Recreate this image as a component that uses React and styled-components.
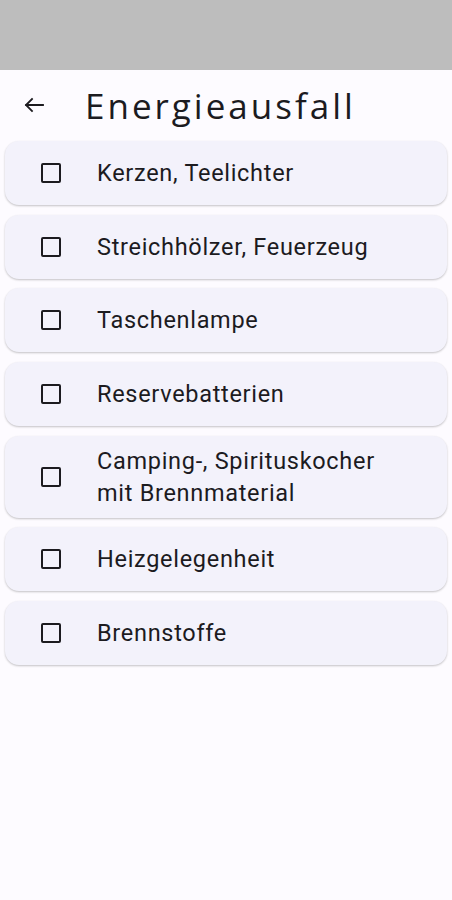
import React from "react";
import styled, { createGlobalStyle } from "styled-components";

const Global = createGlobalStyle`
  html, body { margin: 0; padding: 0; background: #fdfbff; }
  body { font-family: Roboto, "Noto Sans", sans-serif; }
`;

const Screen = styled.div`
  width: 452px;
  min-height: 900px;
  background: #fdfbff;
  display: flex;
  flex-direction: column;
`;

const StatusBar = styled.div`
  height: 70px;
  background: #bdbdbd;
`;

const TopBar = styled.div`
  height: 70px;
  display: flex;
  align-items: center;
  padding-left: 22px;
`;

const BackButton = styled.button`
  width: 24px;
  height: 24px;
  border: none;
  background: none;
  padding: 0;
  display: flex;
  align-items: center;
  justify-content: center;
  color: #1c1b1f;
`;

const Title = styled.h1`
  margin: 0 0 0 39px;
  font-family: "Open Sans", sans-serif;
  font-weight: 400;
  font-size: 35px;
  letter-spacing: 3px;
  color: #1c1b1f;
  line-height: 1;
`;

const List = styled.div`
  display: flex;
  flex-direction: column;
  gap: 9.7px;
  padding: 1px 5px 0 5px;
`;

const Card = styled.label`
  display: flex;
  align-items: center;
  min-height: 64px;
  box-sizing: border-box;
  padding: ${(p) => (p.$tall ? "9px 0" : "0")};
  background: #f3f2fb;
  border-radius: 14px;
  box-shadow: 0 1px 2px rgba(0, 0, 0, 0.18), 0 1px 3px rgba(0, 0, 0, 0.06);
`;

const Box = styled.span`
  width: 20px;
  height: 20px;
  box-sizing: border-box;
  border: 2px solid #1c1b1f;
  border-radius: 2px;
  margin-left: 36px;
  flex-shrink: 0;
`;

const Label = styled.span`
  margin-left: 36px;
  font-family: Roboto, sans-serif;
  font-size: 23.5px;
  letter-spacing: 0.7px;
  line-height: 32px;
  color: #1c1b1f;
`;

const items = [
  "Kerzen, Teelichter",
  "Streichhölzer, Feuerzeug",
  "Taschenlampe",
  "Reservebatterien",
  ["Camping-, Spirituskocher", "mit Brennmaterial"],
  "Heizgelegenheit",
  "Brennstoffe",
];

export default function App() {
  return (
    <Screen>
      <Global />
      <StatusBar />
      <TopBar>
        <BackButton aria-label="Zurück">
          <svg width="20" height="16" viewBox="0 0 20 16" fill="none">
            <path d="M19 8H2M8 2L2 8l6 6" stroke="#1c1b1f" strokeWidth="1.8" strokeLinecap="square" />
          </svg>
        </BackButton>
        <Title>Energieausfall</Title>
      </TopBar>
      <List>
        {items.map((it, i) => (
          <Card key={i} $tall={Array.isArray(it)}>
            <Box />
            <Label>
              {Array.isArray(it) ? (
                <>
                  {it[0]}
                  <br />
                  {it[1]}
                </>
              ) : (
                it
              )}
            </Label>
          </Card>
        ))}
      </List>
    </Screen>
  );
}
